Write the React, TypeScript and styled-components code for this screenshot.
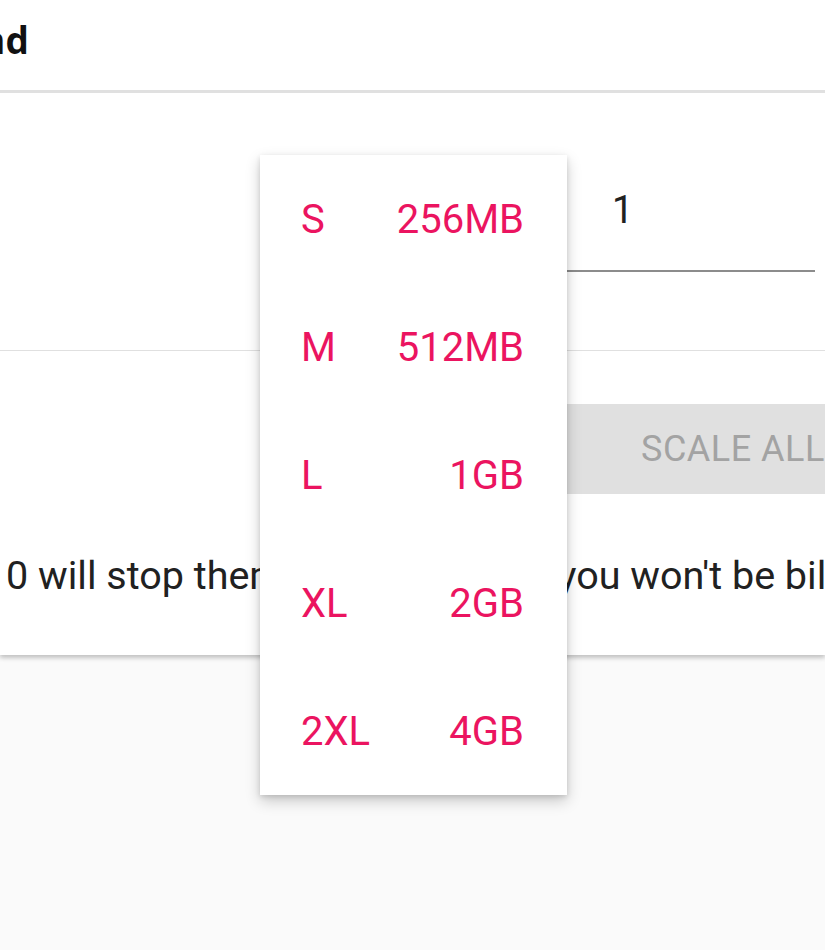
import React from "react";
import styled, { createGlobalStyle } from "styled-components";

const Global = createGlobalStyle`
  html, body { margin: 0; padding: 0; background: #fafafa; overflow: hidden; }
  body { font-family: Roboto, "Liberation Sans", sans-serif; }
`;

const Page = styled.div`
  position: relative;
  width: 825px;
  height: 950px;
  overflow: hidden;
  background: #fafafa;
`;

const Card = styled.section`
  background: #fff;
  box-shadow: 0 3px 4px rgba(0, 0, 0, 0.18), 0 1px 8px rgba(0, 0, 0, 0.08);
`;

const Header = styled.header`
  height: 93px;
  display: flex;
  align-items: center;
  padding-bottom: 11px;
  box-sizing: border-box;
  border-bottom: 3px solid #e0e0e0;
  overflow: hidden;
`;

const Title = styled.h2`
  margin: 0 0 0 -233px;
  font-family: "Open Sans", Roboto, sans-serif;
  font-weight: 700;
  font-size: 37px;
  color: #111;
  white-space: nowrap;
`;

const FieldRow = styled.div`
  height: 257px;
  display: grid;
  grid-template-columns: 567px 248px 1fr;
  align-items: start;
  border-bottom: 1px solid #e0e0e0;
`;

const Field = styled.div`
  grid-column: 2;
  padding-top: 85px;
  min-width: 0;
`;

const Input = styled.input`
  display: block;
  width: 100%;
  box-sizing: border-box;
  border: none;
  border-bottom: 2px solid #8c8c8c;
  outline: none;
  background: transparent;
  font-family: Roboto, sans-serif;
  font-size: 38px;
  line-height: 64px;
  height: 94px;
  color: #212121;
  padding: 0 0 28px 45px;
  margin: 0;
`;

const ActionArea = styled.div`
  height: 304px;
  display: flex;
  flex-direction: column;
  padding-top: 53px;
  box-sizing: border-box;
`;

const ScaleButton = styled.button`
  align-self: flex-start;
  margin-left: 567px;
  height: 90px;
  padding: 0 74px;
  border: none;
  background: #e0e0e0;
  color: #a3a3a3;
  font-family: Roboto, sans-serif;
  font-size: 36px;
  letter-spacing: 0.5px;
  text-transform: uppercase;
  white-space: nowrap;
`;

const Note = styled.p`
  margin: 60px 0 0 6px;
  font-size: 39.5px;
  line-height: 44px;
  color: #212121;
  white-space: nowrap;
`;

const Menu = styled.ul`
  position: absolute;
  left: 260px;
  top: 155px;
  width: 307px;
  margin: 0;
  padding: 0;
  list-style: none;
  background: #fff;
  box-shadow: 0 6px 14px rgba(0, 0, 0, 0.2), 0 2px 5px rgba(0, 0, 0, 0.12);
`;

const MenuItem = styled.li`
  height: 128px;
  display: flex;
  align-items: center;
  justify-content: space-between;
  padding: 0 43px 0 41px;
  font-size: 40px;
  color: #eb1460;
`;

const sizes = [
  ["S", "256MB"],
  ["M", "512MB"],
  ["L", "1GB"],
  ["XL", "2GB"],
  ["2XL", "4GB"],
];

export default function App() {
  return (
    <Page>
      <Global />
      <Card>
        <Header>
          <Title>Scale backend</Title>
        </Header>
        <FieldRow>
          <Field>
            <Input defaultValue="1" />
          </Field>
        </FieldRow>
        <ActionArea>
          <ScaleButton disabled>Scale all</ScaleButton>
          <Note>0 will stop them, so this means you won't be billed</Note>
        </ActionArea>
      </Card>
      <Menu>
        {sizes.map(([k, v]) => (
          <MenuItem key={k}>
            <span>{k}</span>
            <span>{v}</span>
          </MenuItem>
        ))}
      </Menu>
    </Page>
  );
}
